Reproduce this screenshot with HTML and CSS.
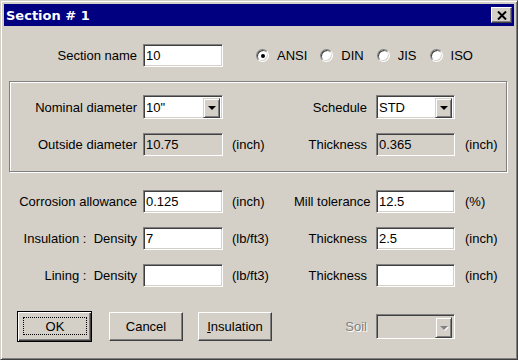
FILE: index.html
```html
<!DOCTYPE html>
<html lang="en">
<head>
<meta charset="utf-8">
<title>Section # 1</title>
<link rel="stylesheet" href="styles.css">
</head>
<body>

<div class="window">
  <div class="titlebar">
    <span class="title">Section # 1</span>
    <div class="close-btn">
      <svg width="10" height="9" viewBox="0 0 10 9"><path d="M1 0.5 L9 8.5 M9 0.5 L1 8.5" stroke="#000" stroke-width="2"/></svg>
    </div>
  </div>

  <div class="content">
    <div class="row">
      <span class="lbl">Section name</span>
      <div class="field">10</div>
      <div class="radios">
        <span class="radio checked"></span><span class="radio-lbl">ANSI</span>
        <span class="radio"></span><span class="radio-lbl">DIN</span>
        <span class="radio"></span><span class="radio-lbl">JIS</span>
        <span class="radio"></span><span class="radio-lbl">ISO</span>
      </div>
    </div>

    <div class="group">
      <div class="row tall">
        <span class="lbl">Nominal diameter</span>
        <div class="field combo"><span class="combo-text">10"</span><span class="combo-btn"><span class="arrow"></span></span></div>
        <span></span>
        <span class="lbl2">Schedule</span>
        <div class="field combo"><span class="combo-text">STD</span><span class="combo-btn"><span class="arrow"></span></span></div>
      </div>
      <div class="row">
        <span class="lbl">Outside diameter</span>
        <div class="field disabled">10.75</div>
        <span class="unit">(inch)</span>
        <span class="lbl2">Thickness</span>
        <div class="field disabled">0.365</div>
        <span class="unit2">(inch)</span>
      </div>
    </div>

    <div class="stack">
      <div class="row">
        <span class="lbl">Corrosion allowance</span>
        <div class="field">0.125</div>
        <span class="unit">(inch)</span>
        <span class="lbl2">Mill tolerance</span>
        <div class="field">12.5</div>
        <span class="unit2">(%)</span>
      </div>
      <div class="row">
        <span class="lbl">Insulation :&nbsp; Density</span>
        <div class="field">7</div>
        <span class="unit">(lb/ft3)</span>
        <span class="lbl2">Thickness</span>
        <div class="field">2.5</div>
        <span class="unit2">(inch)</span>
      </div>
      <div class="row">
        <span class="lbl">Lining :&nbsp; Density</span>
        <div class="field"></div>
        <span class="unit">(lb/ft3)</span>
        <span class="lbl2">Thickness</span>
        <div class="field"></div>
        <span class="unit2">(inch)</span>
      </div>
    </div>

    <div class="row btn-row">
      <div class="buttons">
        <div class="btn default"><span class="focus">OK</span></div>
        <div class="btn">Cancel</div>
        <div class="btn"><span><u>I</u>nsulation</span></div>
      </div>
      <span class="lbl2 off">Soil</span>
      <div class="field combo off-combo"><span class="combo-text"></span><span class="combo-btn"><span class="arrow"></span></span></div>
    </div>
  </div>
</div>

</body>
</html>
```
FILE: styles.css
```css
body {
  margin: 0;
  background: #d4d0c8;
}

.window {
  width: 518px;
  height: 360px;
  box-sizing: border-box;
  background: #d4d0c8;
  border: 1px solid;
  border-color: #d4d0c8 #404040 #404040 #d4d0c8;
  box-shadow: inset 1px 1px #fff, inset -1px -1px #808080;
  padding: 3px;
  font: 13px "Liberation Sans", Arial, sans-serif;
  color: #000;
}

.titlebar {
  height: 22px;
  display: flex;
  align-items: center;
  background: #000080;
  padding: 0 2px;
}

.title {
  color: #fff;
  font: bold 13px "DejaVu Sans", Verdana, sans-serif;
}

.close-btn {
  margin-left: auto;
  width: 21px;
  height: 16px;
  box-sizing: border-box;
  background: #d4d0c8;
  border: 1px solid;
  border-color: #fff #404040 #404040 #fff;
  box-shadow: inset -1px -1px #808080;
  display: flex;
  align-items: center;
  justify-content: center;
}

.content {
  padding-top: 18px;
}

/* rows share the same columns */
.row {
  display: grid;
  grid-template-columns: 139px 80px 71px 82px 79px 1fr;
  align-items: center;
  height: 23px;
}

.row.tall {
  height: 24px;
}

.lbl {
  text-align: right;
  padding-right: 6px;
  white-space: nowrap;
}

.unit {
  padding-left: 9px;
}

.lbl2 {
  text-align: right;
  padding-right: 9px;
  white-space: nowrap;
}

.unit2 {
  padding-left: 10px;
}

.field {
  height: 23px;
  box-sizing: border-box;
  background: #fff;
  border: 1px solid;
  border-color: #808080 #fff #fff #808080;
  box-shadow: inset 1px 1px #404040, inset -1px -1px #d4d0c8;
  padding: 0 2px;
  line-height: 21px;
  white-space: nowrap;
}

.field.disabled {
  background: #d4d0c8;
}

.combo {
  height: 24px;
  display: flex;
  padding: 2px;
  line-height: 20px;
}

.combo-text {
  flex: 1;
}

.combo-btn {
  width: 17px;
  height: 20px;
  box-sizing: border-box;
  background: #d4d0c8;
  border: 1px solid;
  border-color: #d4d0c8 #404040 #404040 #d4d0c8;
  box-shadow: inset 1px 1px #fff, inset -1px -1px #808080;
  display: flex;
  align-items: center;
  justify-content: center;
}

.arrow {
  width: 0;
  height: 0;
  border-left: 4px solid transparent;
  border-right: 4px solid transparent;
  border-top: 4px solid #000;
}

.radios {
  grid-column: 3 / -1;
  display: flex;
  align-items: center;
  padding-left: 33px;
}

.radio {
  width: 13px;
  height: 13px;
  box-sizing: border-box;
  border-radius: 50%;
  border: 1px solid;
  border-color: #808080 #fff #fff #808080;
  box-shadow: inset 1px 1px #404040, inset -1px -1px #d4d0c8;
  background: #fff;
  margin-right: 8px;
  display: flex;
  align-items: center;
  justify-content: center;
}

.radio.checked::after {
  content: "";
  width: 4px;
  height: 4px;
  border-radius: 50%;
  background: #000;
}

.radio-lbl {
  margin-right: 13px;
}

.group {
  margin: 14px 0 0 5px;
  width: 498px;
  box-sizing: border-box;
  border: 1px solid #808080;
  box-shadow: 1px 1px #fff, inset 1px 1px #fff;
  padding: 13px 0 15px;
  display: flex;
  flex-direction: column;
  gap: 14px;
}

.group .row {
  grid-template-columns: 133px 80px 71px 82px 79px 1fr;
}

.stack {
  margin-top: 18px;
  display: flex;
  flex-direction: column;
  gap: 14px;
}

.btn-row {
  margin-top: 24px;
  height: 31px;
}

.buttons {
  grid-column: 1 / 4;
  display: flex;
  align-items: center;
  padding-left: 13px;
}

.btn {
  width: 74px;
  height: 29px;
  box-sizing: border-box;
  margin-left: 15px;
  background: #d4d0c8;
  border: 1px solid;
  border-color: #fff #404040 #404040 #fff;
  box-shadow: inset -1px -1px #808080;
  display: flex;
  align-items: center;
  justify-content: center;
}

.btn.default {
  width: 75px;
  height: 31px;
  margin-left: 0;
  margin-right: 2px;
  border: 1px solid #000;
  box-shadow: inset 1px 1px #fff, inset -1px -1px #404040, inset -2px -2px #808080;
  padding: 5px 4px 6px 5px;
}

.focus {
  flex: 1;
  align-self: stretch;
  border: 1px dotted #000;
  display: flex;
  align-items: center;
  justify-content: center;
}

.off {
  color: #808080;
  text-shadow: 1px 1px #fff;
}

.off-combo {
  height: 25px;
  background: #d4d0c8;
}

.off-combo .combo-btn {
  height: 21px;
}

.off-combo .arrow {
  border-top-color: #808080;
  filter: drop-shadow(1px 1px 0 #fff);
}
```
